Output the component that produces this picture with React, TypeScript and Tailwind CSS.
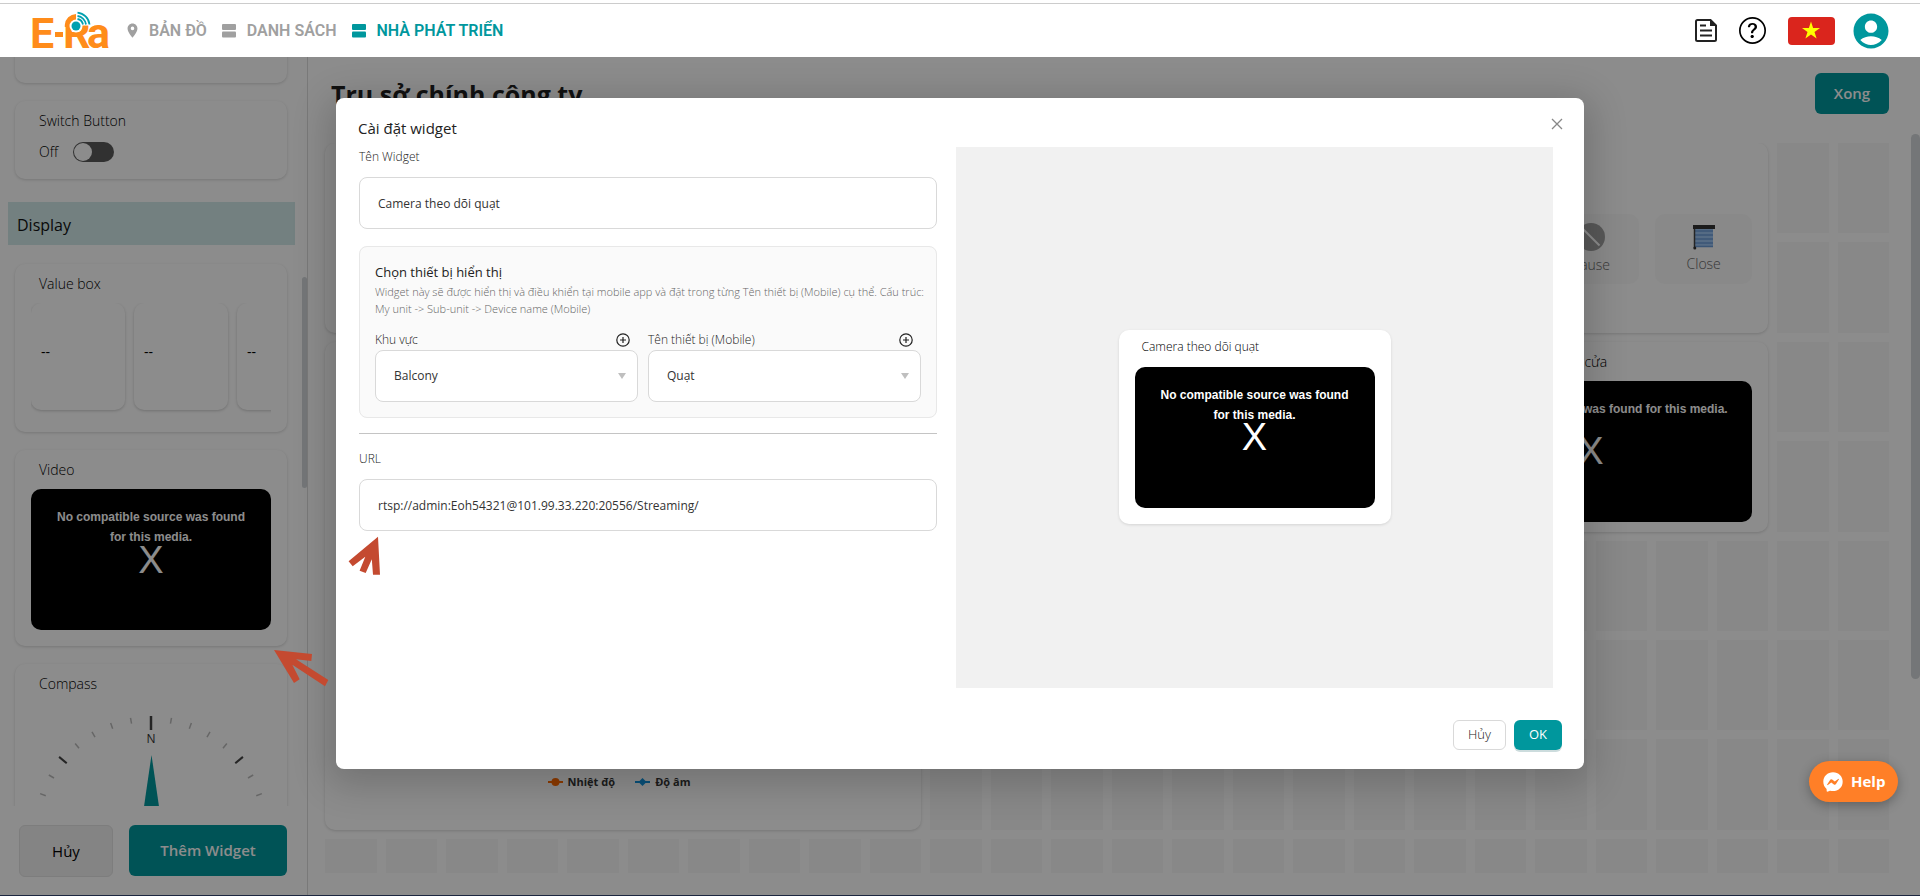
import React, { useState } from "react";
import { MdAccountCircle, MdLocationOn } from "react-icons/md";
import { BsQuestionCircle } from "react-icons/bs";
import { FaFacebookMessenger } from "react-icons/fa";

function Logo() {
  return (
    <svg width="84" height="42" viewBox="-3 -2 84 42" className="overflow-visible" role="img" aria-label="E-Ra">
      <g fill="#ff8c1a" fontFamily="Roboto, sans-serif" fontWeight="700" fontSize="43">
        <text x="-2" y="36">E</text>
        <text x="31" y="36">R</text>
        <text x="55" y="36">a</text>
      </g>
      <rect x="23" y="20" width="8" height="5" fill="#ff8c1a" />
      <path d="M32 -1 H62 V13.500 H50 L44 14 H32Z" fill="#fff" />
      <path d="M32.800 15 V13 A11.500 11.500 0 0 1 44 2 V14 H39 V15Z" fill="#ff8c1a" />
      <circle cx="44" cy="14" r="6.500" fill="#fff" />
      <circle cx="44" cy="14" r="4.500" fill="#00a0af" />
      <g fill="none" stroke="#00a0af" strokeWidth="1.800">
        <path d="M45.500 7 A7 7 0 0 1 51 12.500" />
        <path d="M45.500 4 A10 10 0 0 1 54 12.500" />
        <path d="M45.500 .600 A13.500 13.500 0 0 1 57.500 12.500" />
      </g>
    </svg>
  );
}

function RowsIcon() {
  return (
    <svg width="14" height="14" viewBox="0 0 14 14" fill="currentColor" aria-hidden="true">
      <rect x="0" y="0" width="14" height="6" rx="1" />
      <rect x="0" y="7.500" width="14" height="6" rx="1" />
    </svg>
  );
}

function DocIcon() {
  return (
    <svg width="22" height="23" viewBox="0 0 22 23" fill="none" stroke="#222" strokeWidth="2" aria-hidden="true">
      <path d="M15.500 1H2.500A1.500 1.500 0 0 0 1 2.500V20.500A1.500 1.500 0 0 0 2.500 22H19.500A1.500 1.500 0 0 0 21 20.500V6.500Z" />
      <path d="M15 .500V7H21.500Z" fill="#222" stroke="none" />
      <path d="M5 6.500h6M5 11.500h12M5 16.500h12" />
    </svg>
  );
}

function Flag() {
  return (
    <svg width="47" height="28" viewBox="0 0 47 28" role="img" aria-label="Tiếng Việt">
      <rect width="47" height="28" rx="4" fill="#da251d" />
      <path
        d="M23 4.500l2.100 6.400h6.900l-5.500 4.100 2.100 6.500-5.600-4-5.600 4 2.100-6.500-5.500-4.100h6.900z"
        fill="#ff0"
      />
    </svg>
  );
}

function PlusCircle() {
  return (
    <svg width="14" height="14" viewBox="0 0 14 14" fill="none" stroke="#222" strokeWidth="1.200" aria-hidden="true">
      <circle cx="7" cy="7" r="6.200" />
      <path d="M7 4v6M4 7h6" />
    </svg>
  );
}

function Header() {
  return (
    <header className="flex h-[57px] shrink-0 flex-col bg-white">
      <div className="mt-[3px] h-px bg-[#cccccc]" />
      <div className="flex flex-1 items-center justify-between pr-8 pl-[29px]">
        <div className="flex items-center">
          <a href="#home" aria-label="E-Ra">
            <Logo />
          </a>
          <nav className="ml-[11px] flex items-center gap-[15px] font-['Roboto',sans-serif] text-base font-semibold text-[#a0a0a0]">
            <a href="#map" className="flex items-center gap-2">
              <MdLocationOn size={17} />
              BẢN ĐỒ
            </a>
            <a href="#list" className="flex items-center gap-[11px]">
              <RowsIcon />
              DANH SÁCH
            </a>
            <a href="#dev" className="flex items-center gap-[11px] text-[#00979d]">
              <RowsIcon />
              NHÀ PHÁT TRIỂN
            </a>
          </nav>
        </div>
        <div className="flex items-center gap-[22px]">
          <button aria-label="Tài liệu">
            <DocIcon />
          </button>
          <button aria-label="Trợ giúp">
            <BsQuestionCircle size={27} color="#000" />
          </button>
          <div className="flex items-center gap-[15px]">
            <button aria-label="Ngôn ngữ">
              <Flag />
            </button>
            <button aria-label="Tài khoản" className="-mr-1">
              <MdAccountCircle size={42} color="#00979d" />
            </button>
          </div>
        </div>
      </div>
    </header>
  );
}

const cardBase = "rounded-[10px] bg-white shadow-[0_1px_3px_rgba(0,0,0,0.16)]";

function WidgetCard({ title, className = "", children }: { title: string; className?: string; children?: React.ReactNode }) {
  return (
    <section className={`${cardBase} px-4 pt-[9px] ${className}`}>
      <h3 className="mb-2 px-2 text-sm leading-[22px] font-light text-black">{title}</h3>
      {children}
    </section>
  );
}

function VideoError() {
  return (
    <div className="relative h-[141px] rounded-[10px] bg-black px-5 pt-[18px] text-center font-['Liberation_Sans',Arial,sans-serif] text-white">
      <p className="text-xs leading-5 font-bold">No compatible source was found for this media.</p>
      <span className="absolute inset-0 flex items-center justify-center text-[38px] leading-none">X</span>
    </div>
  );
}

const ticks = [-80, -70, -60, -50, -40, -30, -20, -10, 10, 20, 30, 40, 50, 60, 70, 80];

function Compass() {
  return (
    <svg viewBox="0 0 240 150" className="mt-[15px] block w-full" aria-label="Compass">
      {ticks.map((deg) => {
        const major = Math.abs(deg) === 50;
        return (
          <line
            key={deg}
            x1="120"
            x2="120"
            y1={major ? 4 : 6}
            y2={major ? 14 : 12}
            stroke={major ? "#444" : "#bbb"}
            strokeWidth={major ? 2 : 1.5}
            transform={`rotate(${deg} 120 124)`}
          />
        );
      })}
      <line x1="120" x2="120" y1="6" y2="20" stroke="#444" strokeWidth="2.500" />
      <text x="120" y="33" textAnchor="middle" fontSize="12" fill="#333" fontWeight="500">
        N
      </text>
      <path d="M120.500 45 L132 124 H109Z" fill="#00979d" />
    </svg>
  );
}

function Sidebar() {
  const [on, setOn] = useState(false);
  return (
    <aside className="relative flex w-[308px] shrink-0 flex-col border-r border-[#dcdcdc] bg-white">
      <div className="min-h-0 flex-1 overflow-hidden pr-5 pl-[15px]">
        <div className={`${cardBase} -mt-5 h-[46px]`} />
        <WidgetCard title="Switch Button" className="mt-[18px] h-[78px]">
          <label className="flex items-center gap-[15px] px-2 text-sm leading-6 font-light">
            Off
            <input type="checkbox" role="switch" className="peer sr-only" checked={on} onChange={() => setOn(!on)} />
            <span className="flex h-5 w-[41px] items-center rounded-full bg-[#5a5a5a] p-px">
              <span className="size-[18px] rounded-full bg-white" />
            </span>
          </label>
        </WidgetCard>
        <h2 className="mt-[23px] -mr-2 -ml-[7px] bg-[#d1e9e9] px-[9px] pt-[5px] pb-[2px] text-base leading-9 font-medium text-[#111]">
          Display
        </h2>
        <WidgetCard title="Value box" className="mt-[19px] h-[168px]">
          <div className="flex gap-[9px] overflow-hidden pb-2">
            {[0, 1, 2].map((i) => (
              <div
                key={i}
                className="flex h-[107px] w-[94px] shrink-0 items-center rounded-[10px] bg-white pb-[10px] pl-[10px] text-sm shadow-[0_1px_3px_rgba(0,0,0,0.2)]"
              >
                --
              </div>
            ))}
          </div>
        </WidgetCard>
        <WidgetCard title="Video" className="mt-[18px] pb-4">
          <VideoError />
        </WidgetCard>
        <WidgetCard title="Compass" className="mt-[18px] pb-4">
          <Compass />
        </WidgetCard>
      </div>
      <div className="flex h-[89px] shrink-0 gap-4 pt-[19px] pr-5 pl-[19px] text-[15px] font-semibold">
        <button className="h-[52px] w-[94px] rounded-md border border-[#e4e4e4] bg-[#f0f0f0] font-medium text-black">Hủy</button>
        <button className="h-[51px] flex-1 rounded-md bg-[#00979d] text-white">Thêm Widget</button>
      </div>
      <div className="absolute top-[220px] right-0 h-[211px] w-[5px] rounded-full bg-[#d3d7da]" />
    </aside>
  );
}

function BlindIcon() {
  return (
    <svg width="22" height="26" viewBox="0 0 22 26" aria-hidden="true">
      <rect x="2" y="4" width="18" height="19" fill="#9cc3f0" />
      <path d="M2 7h18M2 11h18M2 15h18M2 19h18M2 22.500h18" stroke="#6b9bd6" strokeWidth="1.500" />
      <rect x="0" y="1" width="22" height="4" fill="#333" />
      <path d="M1.500 5v19" stroke="#444" strokeWidth="1.500" />
      <circle cx="1.800" cy="24" r="1.500" fill="#333" />
    </svg>
  );
}

function StopIcon() {
  return (
    <svg width="28" height="28" viewBox="0 0 28 28" aria-hidden="true">
      <circle cx="14" cy="14" r="14" fill="#a0a0a0" />
      <path d="M5.500 5.500l17 17" stroke="#fff" strokeWidth="2" />
    </svg>
  );
}

const spans = [
  { from: 0, to: 10, top: 0, bottom: 7 },
  { from: 18, to: 24, top: 0, bottom: 4 },
];

function freeCells() {
  const cells: { col: number; row: number }[] = [];
  for (let row = 0; row < 8; row++) {
    for (let col = 0; col < 26; col++) {
      const taken = spans.some((s) => col >= s.from && col < s.to && row >= s.top && row < s.bottom);
      if (!taken) cells.push({ col, row });
    }
  }
  return cells;
}

const blindButton = "flex h-[70px] flex-1 flex-col items-center justify-center gap-1 rounded-[10px] bg-[#f9f9f9]";

function Dashboard() {
  return (
    <main className="relative flex min-w-0 flex-1 flex-col pr-[31px] pl-[17px]">
      <div className="flex h-[86px] shrink-0 items-start justify-between pt-4">
        <h1 className="pl-[6px] text-[25px] leading-[42px] font-bold text-[#1f1f1f]">Trụ sở chính công ty</h1>
        <button className="h-[41px] w-[74px] rounded-md bg-[#00979d] text-[15px] font-semibold text-white">Xong</button>
      </div>
      <div className="-mx-1 mb-[22px] min-h-0 flex-1 overflow-hidden px-1">
        <div className="grid h-[786px] grid-cols-[repeat(26,minmax(0,1fr))] grid-rows-[repeat(8,minmax(0,1fr))] gap-[9px]">
          {freeCells().map(({ col, row }) => (
            <div key={`${col}-${row}`} className="bg-[#f7f7f7]" style={{ gridColumn: col + 1, gridRow: row + 1 }} />
          ))}
          <div className={`${cardBase} col-[1/11] row-[1/3]`} />
          <div className={`${cardBase} col-[1/11] row-[3/8] flex items-end justify-center gap-5 pr-2 pb-[38px] text-[11px] leading-5 font-bold text-[#333]`}>
            <span className="flex items-center gap-[5px]">
              <svg width="15" height="10" viewBox="0 0 15 10" aria-hidden="true">
                <path d="M0 5h15" stroke="#ff6a00" strokeWidth="2" />
                <circle cx="7.500" cy="5" r="4" fill="#ff6a00" />
              </svg>
              Nhiệt độ
            </span>
            <span className="flex items-center gap-[5px]">
              <svg width="15" height="10" viewBox="0 0 15 10" aria-hidden="true">
                <path d="M0 5h15" stroke="#0f93dd" strokeWidth="2" />
                <path d="M7.500 1l4 4-4 4-4-4z" fill="#0f93dd" />
              </svg>
              Độ âm
            </span>
          </div>
          <div className={`${cardBase} col-[19/25] row-[1/3] flex items-center gap-4 px-4 pt-[22px] text-sm font-light text-[#666]`}>
            <button className={blindButton}>
              <BlindIcon />
              Open
            </button>
            <button className={blindButton}>
              <StopIcon />
              Pause
            </button>
            <button className={blindButton}>
              <BlindIcon />
              Close
            </button>
          </div>
          <WidgetCard title="Camera theo dõi ngoài cửa" className="col-[19/25] row-[3/5]">
            <VideoError />
          </WidgetCard>
        </div>
      </div>
      <div className="absolute top-[77px] right-0 h-[545px] w-[9px] rounded-full bg-[#d3d7da]" />
    </main>
  );
}

const fieldBase = "block h-[52px] w-full rounded-lg border border-[#d9d9d9] bg-white px-[18px] text-xs text-[#333] outline-none";

function SelectField({ id, label, options }: { id: string; label: string; options: string[] }) {
  return (
    <div>
      <div className="flex h-5 items-center justify-between pr-2 text-xs font-light text-[#222]">
        <label htmlFor={id}>{label}</label>
        <button aria-label={`Thêm ${label}`}>
          <PlusCircle />
        </button>
      </div>
      <div className="relative">
        <select id={id} className={`${fieldBase} appearance-none`}>
          {options.map((o) => (
            <option key={o}>{o}</option>
          ))}
        </select>
        <svg className="pointer-events-none absolute top-[23px] right-3" width="8" height="6" viewBox="0 0 8 6" aria-hidden="true">
          <path d="M0 0h8L4 6z" fill="#bfbfbf" />
        </svg>
      </div>
    </div>
  );
}

function SettingsModal() {
  return (
    <div
      role="dialog"
      aria-labelledby="dialog-title"
      className="relative w-[65%] self-start rounded-lg bg-white pt-[18px] pb-[19px] shadow-[0_8px_36px_8px_rgba(0,0,0,0.18)]"
    >
      <h2 id="dialog-title" className="mb-[7px] px-[22px] text-[15px] leading-6 text-[#222]">
        Cài đặt widget
      </h2>
      <button aria-label="Đóng" className="absolute top-5 right-[21px]">
        <svg width="12" height="12" viewBox="0 0 12 12" stroke="#888" strokeWidth="1.300" aria-hidden="true">
          <path d="M1 1l10 10M11 1L1 11" />
        </svg>
      </button>
      <div className="grid grid-cols-[minmax(0,578fr)_minmax(0,597fr)] gap-[19px] pr-[31px] pl-[23px]">
        <form className="min-w-0 text-xs">
          <label htmlFor="widget-name" className="mb-[10px] block leading-5 font-light text-[#222]">
            Tên Widget
          </label>
          <input id="widget-name" defaultValue="Camera theo dõi quạt" className={fieldBase} />
          <fieldset className="mt-[17px] min-w-0 rounded-lg border border-[#e8e8e8] bg-[#fafafa] p-[15px]">
            <h3 className="mb-px text-[13px] leading-5 text-[#222]">Chọn thiết bị hiển thị</h3>
            <p className="mb-[13px] text-[11px] leading-[17px] font-light whitespace-nowrap text-[#666]">
              Widget này sẽ được hiển thị và điều khiển tại mobile app và đặt trong từng Tên thiết bị (Mobile) cụ thể. Cấu trúc:
              <br />
              My unit -&gt; Sub-unit -&gt; Device name (Mobile)
            </p>
            <div className="grid grid-cols-[263fr_273fr] gap-[10px]">
              <SelectField id="area" label="Khu vực" options={["Balcony"]} />
              <SelectField id="device" label="Tên thiết bị (Mobile)" options={["Quạt"]} />
            </div>
          </fieldset>
          <hr className="my-[15px] border-[#c4c4c4]" />
          <label htmlFor="url" className="mb-[10px] block leading-5 font-light text-[#222]">
            URL
          </label>
          <input id="url" defaultValue="rtsp://admin:Eoh54321@101.99.33.220:20556/Streaming/" className={fieldBase} />
        </form>
        <div className="flex h-[541px] items-center justify-center bg-[#f1f1f1] pt-[18px]">
          <section className="w-[272px] rounded-[10px] bg-white px-4 pt-[6px] pb-4 shadow-[0_1px_3px_rgba(0,0,0,0.12)]">
            <h3 className="mb-[9px] px-[7px] text-xs leading-[22px] font-light text-black">Camera theo dõi quạt</h3>
            <VideoError />
          </section>
        </div>
      </div>
      <div className="mt-8 flex justify-end gap-2 pr-[22px] text-[13px]">
        <button className="h-[30px] w-[53px] rounded-md border border-[#d9d9d9] bg-white font-light text-[#222]">Hủy</button>
        <button className="h-[30px] w-12 rounded-md bg-[#00979d] text-white shadow-[0_2px_0_rgba(0,80,85,0.2)]">OK</button>
      </div>
      <svg className="absolute top-[438px] left-[12px]" width="33" height="40" viewBox="348 536 33 40" aria-hidden="true">
        <path
          fill="#c44a30"
          d="M378 536.700L348.600 561.300L352.700 566.300L365.300 556.700L359.600 570.700L365.700 573L371.800 559.300L373 574.700H380Z"
        />
      </svg>
    </div>
  );
}

export default function App() {
  return (
    <div className="flex h-screen flex-col overflow-hidden border-b border-[#1c2740] bg-white font-['Open_Sans','Noto_Sans',sans-serif] text-black">
      <Header />
      <div className="relative flex min-h-0 flex-1">
        <Sidebar />
        <Dashboard />
        <div className="absolute inset-0 flex justify-center bg-black/45 pt-[41px]">
          <SettingsModal />
        </div>
        <svg className="absolute top-[592px] left-[273px]" width="56" height="38" viewBox="819 625 168 114" aria-hidden="true">
          <path fill="#c44a30" d="M822 628L936 640L934 661L888 656L985 718L975 737L877 672L899 716L882 727Z" />
        </svg>
        <button className="absolute right-[22px] bottom-[93px] flex h-[41px] w-[89px] items-center gap-2 rounded-full bg-[#ff7f27] pl-[14px] text-[15px] font-bold text-white shadow-[0_3px_12px_rgba(0,0,0,0.3)]">
          <FaFacebookMessenger size={20} />
          Help
        </button>
      </div>
    </div>
  );
}
